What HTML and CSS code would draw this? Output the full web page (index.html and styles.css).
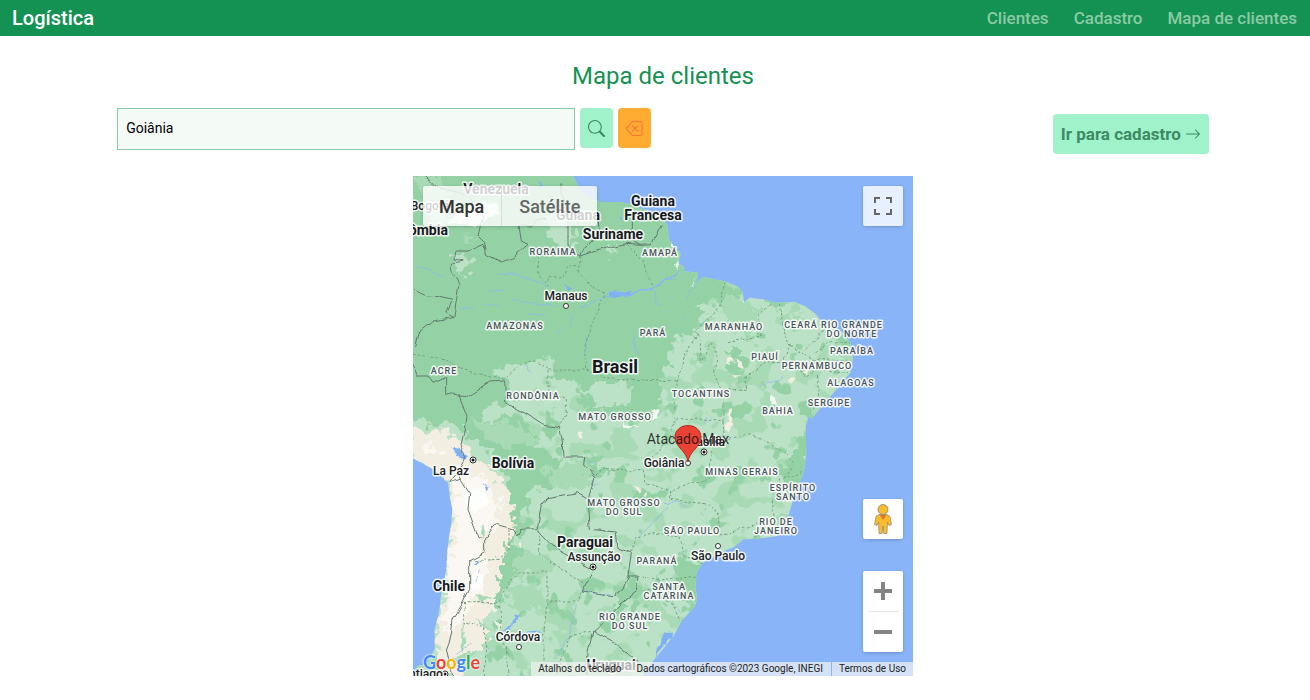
FILE: index.html
```html
<!DOCTYPE html>
<html lang="pt-BR">
<head>
<meta charset="utf-8">
<meta name="viewport" content="width=device-width, initial-scale=1">
<title>Logística - Mapa de clientes</title>
<link rel="stylesheet" href="styles.css">
</head>
<body>
<header class="topbar">
  <a class="brand" href="#">Logística</a>
  <nav class="menu">
    <a href="#">Clientes</a>
    <a href="#">Cadastro</a>
    <a href="#">Mapa de clientes</a>
  </nav>
</header>
<main class="page">
  <h1 class="title">Mapa de clientes</h1>
  <div class="toolbar">
    <form class="search">
      <input class="search-input" type="text" value="Goiânia" aria-label="Buscar cidade">
      <button class="icon-btn find" type="button" aria-label="Buscar">
        <svg width="17" height="17" viewBox="0 0 16 16" fill="currentColor"><path d="M11.742 10.344a6.5 6.5 0 1 0-1.397 1.398h-.001c.03.04.062.078.098.115l3.85 3.85a1 1 0 0 0 1.415-1.414l-3.85-3.85a1.007 1.007 0 0 0-.115-.1zM12 6.5a5.5 5.5 0 1 1-11 0 5.5 5.5 0 0 1 11 0z"/></svg>
      </button>
      <button class="icon-btn clear" type="button" aria-label="Limpar">
        <svg width="17" height="17" viewBox="0 0 16 16" fill="currentColor"><path d="M5.83 5.146a.5.5 0 0 0 0 .708L7.975 8l-2.147 2.146a.5.5 0 0 0 .707.708l2.147-2.147 2.146 2.147a.5.5 0 0 0 .707-.708L9.39 8l2.146-2.146a.5.5 0 0 0-.707-.708L8.683 7.293 6.536 5.146a.5.5 0 0 0-.707 0z"/><path d="M13.683 1a2 2 0 0 1 2 2v10a2 2 0 0 1-2 2h-7.08a2 2 0 0 1-1.519-.698L.241 8.65a1 1 0 0 1 0-1.302L5.084 1.7A2 2 0 0 1 6.603 1h7.08zm-7.08 1a1 1 0 0 0-.76.35L1 8l4.844 5.65a1 1 0 0 0 .759.35h7.08a1 1 0 0 0 1-1V3a1 1 0 0 0-1-1h-7.08z"/></svg>
      </button>
    </form>
    <a class="go-btn" href="#">Ir para cadastro
      <svg width="16" height="16" viewBox="0 0 16 16" fill="currentColor"><path fill-rule="evenodd" d="M1 8a.5.5 0 0 1 .5-.5h11.793l-3.147-3.146a.5.5 0 0 1 .708-.708l4 4a.5.5 0 0 1 0 .708l-4 4a.5.5 0 0 1-.708-.708L13.293 8.5H1.5A.5.5 0 0 1 1 8z"/></svg>
    </a>
  </div>

  <section class="map" aria-label="Mapa">
    <svg class="terrain" viewBox="0 0 1500 1500" aria-hidden="true">
      <defs>
        <path id="coast" d="M0 0H480L500 40 530 62 562 78 620 78 650 84 690 100 720 108 745 130 762 145 768 190 782 210 803 232 796 262 815 275 808 285 855 290 852 312 838 332 870 303 905 310 940 318 975 332 990 352 992 380 1010 365 1050 370 1085 380 1145 378 1175 390 1205 412 1230 440 1290 470 1312 500 1320 545 1312 590 1275 635 1235 680 1215 705 1195 728 1188 718 1178 750 1180 830 1172 890 1150 940 1135 990 1125 1025 1100 1055 1095 1080 1035 1088 990 1090 965 1112 920 1130 870 1160 850 1190 848 1240 852 1268 845 1292 805 1335 785 1375 750 1420 720 1455 690 1500H22L12 1470 40 1465 65 1420 65 1360 78 1310 85 1250 100 1180 105 1105 115 1040 118 1000 110 960 105 920 60 880 0 847Z"/>
        <clipPath id="land"><use href="#coast"/></clipPath>
        <filter id="rough" x="-5%" y="-5%" width="110%" height="110%"><feTurbulence type="fractalNoise" baseFrequency=".05" numOctaves="2" seed="4"/><feDisplacementMap in="SourceGraphic" scale="20" xChannelSelector="R" yChannelSelector="G"/></filter>
        <filter id="line" filterUnits="userSpaceOnUse" x="0" y="0" width="1500" height="1500"><feTurbulence type="fractalNoise" baseFrequency=".03" numOctaves="1" seed="5"/><feDisplacementMap in="SourceGraphic" scale="20" xChannelSelector="R" yChannelSelector="G"/></filter>
        <filter id="edge" x="-5%" y="-5%" width="110%" height="110%"><feTurbulence type="fractalNoise" baseFrequency=".035" numOctaves="3" seed="8"/><feDisplacementMap in="SourceGraphic" scale="70" xChannelSelector="R" yChannelSelector="G"/></filter>
        <filter id="patchA" x="0" y="0" width="100%" height="100%"><feTurbulence type="fractalNoise" baseFrequency=".012 .014" numOctaves="3" seed="11"/><feColorMatrix values="0 0 0 0 0 0 0 0 0 0 0 0 0 0 0 20 0 0 0 -11.2" result="m"/><feComposite in="SourceGraphic" in2="m" operator="in"/></filter>
        <filter id="patchB" x="0" y="0" width="100%" height="100%"><feTurbulence type="fractalNoise" baseFrequency=".018 .015" numOctaves="3" seed="27"/><feColorMatrix values="0 0 0 0 0 0 0 0 0 0 0 0 0 0 0 20 0 0 0 -12.8" result="m"/><feComposite in="SourceGraphic" in2="m" operator="in"/></filter>
      </defs>
      <g clip-path="url(#land)">
        <rect class="light" width="1500" height="1500"/>
        <path class="mid" filter="url(#patchA)" d="M250 560L760 300 1400 300V1500H200V700Z"/>
        <path class="deep" filter="url(#patchB)" d="M200 850L760 300 1400 300V1500H200Z"/>
        <path class="deep" filter="url(#edge)" d="M-40-40H540L800 160 870 290 990 340 860 390 850 470 790 480 800 520 750 540 770 570 740 620 745 690 690 720 600 720 510 700 500 620 400 610 400 540 330 560 290 620 280 700 330 720 380 800 440 850 430 920 350 950 320 1070 285 1110 255 1060 280 930 170 850 90 770 0 720-40 700Z"/>
        <path class="deep" filter="url(#edge)" d="M1200 730L1180 920 1130 960 1100 880ZM960 500L1010 560 980 640 950 560ZM790 1130L870 1170 860 1280 800 1270ZM650 1180L690 1240 610 1330 600 1280ZM280 1060L320 1120 290 1230 250 1290 240 1230ZM530 860L620 880 530 910ZM910 320L990 360 950 400 910 380Z"/>
        <path class="light" filter="url(#edge)" d="M410 120L470 130 490 200 440 210 400 180ZM40 90L100 90 100 150 60 160ZM130 240L180 250 165 290 130 285ZM240 590L280 560 370 570 400 610 380 640 310 640 270 610ZM500 650L540 615 650 610 650 680 560 700 540 670ZM230 700L320 660 300 720 200 740ZM0 750L120 740 230 830 290 920 290 1060 240 1060ZM590 195L612 210 600 245ZM790 480L850 500 830 600 790 560ZM390 560L410 540 410 600 370 620Z"/>
        <path class="mid" filter="url(#edge)" d="M170 740L300 740 380 800 280 820ZM390 880L520 850 540 930 430 930ZM930 350L1040 400 1020 500 950 450ZM1130 400L1180 420 1150 470ZM0 0H80L130 80 40 100ZM320 1120L380 1150 330 1190 280 1260ZM160 165L190 190 170 200ZM280 1290L370 1210 380 1320Z"/>
        <path class="sand" filter="url(#edge)" d="M-30 750L90 765 150 800 190 850 250 895 295 950 305 1030 290 1110 260 1150 265 1210 240 1290 215 1330 230 1390 200 1420 160 1450 150 1500H20L70 1450 70 1350 95 1250 100 1100 115 1000 100 915 0 845Z"/>
        <path class="snow" filter="url(#edge)" d="M125 880L210 900 260 970 250 1050 200 1090 220 1150 210 1240 170 1290 145 1340 95 1380 100 1200 130 1060ZM40 790L90 830 50 850Z"/>
        <path class="white" filter="url(#rough)" d="M155 930L215 940 225 985 185 1005 155 985ZM180 1185L215 1200 205 1240 175 1240ZM1070 655L1090 665 1095 690 1072 685ZM722 700L740 695 735 725 715 735ZM625 742L675 752 630 755ZM780 265L800 250 790 280ZM838 328L850 305 835 328ZM988 372L1000 365 995 382ZM770 190L790 215 775 210ZM170 80H250L260 110 190 150 100 140Z"/>
        <path class="sand" filter="url(#rough)" d="M943 703L957 700 952 735 963 745 945 770 933 755 945 730ZM945 545L958 550 950 568 940 560ZM970 548L990 560 992 582 975 570ZM958 598L985 598 965 608ZM1125 610L1150 600 1135 625ZM1172 588L1190 580 1185 600ZM497 772L510 768 508 785 497 788ZM662 932L685 938 675 950ZM690 955L702 948 698 965ZM318 1100L330 1098 322 1118ZM240 1330L262 1345 255 1365ZM190 1375L215 1400 200 1410Z"/>
        <path class="green-streak" filter="url(#rough)" d="M190 1250L235 1270 200 1280ZM150 1340L160 1400 145 1430ZM185 1320L240 1370 205 1350ZM110 1450L190 1420 180 1440 130 1470ZM205 1050L215 1060 212 1090ZM15 1470L70 1440 85 1500H0Z"/>
        <path class="lake" filter="url(#rough)" d="M118 812L140 815 145 830 165 840 158 850 130 840ZM212 920L226 940 220 946ZM310 1312L320 1320 312 1342 300 1340 295 1362 270 1370 280 1350 298 1340ZM195 1148L200 1165 190 1168ZM455 326L478 340 466 346ZM578 365L592 345 660 352 635 362ZM620 110L628 128 622 138ZM755 1370L785 1370 760 1400 730 1440ZM735 1410L745 1412 728 1450ZM380 10L388 30 380 42ZM340 1370L385 1365 350 1378Z"/>
        <g class="water" filter="url(#line)">
          <path class="river" d="M590 350L650 358 720 335 760 315 800 285"/>
          <path d="M395 385L435 392M500 395L560 372 590 350M245 295L300 293 350 310 405 332M230 345L275 342M140 405L180 390M210 386L260 385M300 372L400 390M395 415L340 420M725 340L730 375 745 392M765 315L790 310M820 370L825 350 850 330M810 420L825 438M660 480L670 520 680 545M10 272L65 290 95 305M1042 630L1070 620 1110 610 1112 602M185 1215L200 1180M505 1245L540 1255 600 1256M755 980L790 978 820 990M680 1080L730 1030 770 990M440 1440L450 1400 470 1380 490 1290M230 1430L215 1410M770 1275L805 1310M545 900L545 935M530 855L545 865M130 1435L180 1400M480 420L470 450M370 450L380 440M520 480L515 530M345 570L350 590M430 475L445 455M340 20L358 45M420 90L430 70M880 740L880 720M790 720L780 750"/>
        </g>
        <g class="borders" filter="url(#line)">
          <path d="M35 0L80 40 170 60 185 90 210 120 202 150 195 180 215 200 220 235 265 258 300 245 345 205 325 195 318 150 350 150 370 135 400 130M125 225L165 225 210 205 218 220M125 225L122 248 148 255 118 262 118 290 138 325 122 425 98 410 115 370 75 358 40 360 0 340M122 425L60 435 15 470 5 510M440 20L465 120 465 210 500 240 555 222 595 212 645 202 680 205 715 203 745 145M555 120L560 180 510 215 500 240M655 110L655 190 680 205M0 565L15 600 45 600 60 622 98 605 98 655 160 662 230 618 275 615 278 680 310 700 345 715 395 748 440 755 448 800 450 843 518 843 515 870 545 905 525 970 532 1060 610 1068 615 1115 655 1130 645 1200 630 1240 600 1262 508 1248 540 1190M137 655L162 720 155 775 142 830 155 850 135 885 145 910 170 950 165 1000 195 1082 215 1085 250 1045 300 1060 315 1080 325 1060 372 1058 385 990 405 965 490 950 525 970M372 1058L430 1120 540 1180M215 1085L215 1130 170 1155 170 1240 150 1280 120 1330 115 1380 100 1420 120 1500M135 885L110 920 145 910M645 1200L675 1200 670 1245 620 1285 580 1330 540 1365 525 1430 520 1500M540 1365L610 1405 670 1455 700 1500"/>
          <path class="dash" d="M500 240L500 290 540 335 575 355 515 510 518 582 405 582 405 650 460 670 460 710 440 750M375 240L378 300 405 330 410 305 450 305 460 272 500 272M640 205L690 255 700 290 725 330M0 535L90 548 150 580 240 605 275 610 330 560 370 558 410 582M520 582L575 605 790 618 780 725 820 730 900 730 930 735 930 650 905 590 910 520 895 500 865 560 860 480 845 465 920 390 935 320M790 618L830 510 860 465M1040 480L1040 420 1070 385M1100 383L1105 440 1130 510 1110 560 1060 560 1000 600 1000 640 950 640M1180 520L1240 455M1205 530L1250 500 1310 500M1200 550L1310 555M1110 560L1180 600 1220 580 1310 590M1210 600L1220 660 1200 700M1130 510L1200 550M1010 775L1100 815 1145 860 1110 910 1170 890M930 735L935 800 1000 775M895 820L890 910 830 920 770 945 700 920 690 880 770 790 780 730M545 900L570 880 640 885 690 880M770 945L770 970 890 985 920 1020 920 1080 1040 1040M655 1130L670 1085 720 1070 800 1080 815 1140 870 1165M675 1200L740 1215 850 1200M675 1240L720 1245 780 1290 800 1330M1075 970L1080 1020 1020 1090M315 1188L402 1188 402 1278 495 1278 505 1248M402 1278L390 1400 390 1480M380 1060L380 1135 510 1220M315 1188L255 1280 155 1280 150 1340 215 1355 215 1500M285 1060L285 1120 260 1150 170 1155M260 1290L270 1400 290 1440M470 1380L540 1365M945 500L1040 480M280 1410L285 1500M470 1380L430 1500M1100 910L1090 960"/>
        </g>
      </g>
    </svg>
    <svg class="labels" viewBox="0 0 500 500" role="img" aria-label="Cidades e estados">
      <g class="dots">
        <circle cx="153" cy="130" r="2.5"/><circle cx="305" cy="370" r="2.5"/><circle cx="106" cy="471" r="2.5"/><circle cx="275" cy="287" r="2.5"/>
        <g class="capital"><circle cx="60" cy="284" r="3"/><circle cx="291" cy="276" r="3"/><circle cx="180" cy="391" r="3"/><circle cx="32" cy="498" r="3"/></g>
        <g class="core"><circle cx="60" cy="284" r="1.5"/><circle cx="291" cy="276" r="1.5"/><circle cx="180" cy="391" r="1.5"/><circle cx="32" cy="498" r="1.5"/></g>
      </g>
      <g class="state">
        <text x="140" y="79">RORAIMA</text><text x="247" y="80">AMAPÁ</text><text x="102" y="153">AMAZONAS</text><text x="240" y="160">PARÁ</text><text x="321" y="154">MARANHÃO</text><text x="388" y="152">CEARÁ</text><text x="439" y="152">RIO GRANDE</text><text x="439" y="161">DO NORTE</text><text x="352" y="184">PIAUÍ</text><text x="439" y="178">PARAÍBA</text><text x="404" y="193">PERNAMBUCO</text><text x="438" y="210">ALAGOAS</text><text x="416" y="230">SERGIPE</text><text x="31" y="198">ACRE</text><text x="120" y="223">RONDÔNIA</text><text x="288" y="221">TOCANTINS</text><text x="365" y="238">BAHIA</text><text x="202" y="244">MATO GROSSO</text><text x="329" y="299">MINAS GERAIS</text><text x="380" y="315">ESPÍRITO</text><text x="380" y="324">SANTO</text><text x="211" y="330">MATO GROSSO</text><text x="211" y="339">DO SUL</text><text x="279" y="358">SÃO PAULO</text><text x="363" y="349">RIO DE</text><text x="363" y="358">JANEIRO</text><text x="244" y="388">PARANÁ</text><text x="256" y="414">SANTA</text><text x="256" y="423">CATARINA</text><text x="217" y="444">RIO GRANDE</text><text x="217" y="453">DO SUL</text>
      </g>
      <g class="city">
        <text x="153" y="124">Manaus</text><text x="38" y="299">La Paz</text><text x="251" y="291">Goiânia</text><text x="292" y="270">Brasília</text><text x="181" y="385">Assunção</text><text x="305" y="384">São Paulo</text><text x="105" y="465">Córdova</text><text x="17" y="34">Bogotá</text><text x="6" y="502">Santiago</text>
      </g>
      <g class="country">
        <text x="83" y="18">Venezuela</text><text x="165" y="44">Guiana</text><text x="240" y="30">Guiana</text><text x="240" y="44">Francesa</text><text x="200" y="63">Suriname</text><text x="5" y="59">Colômbia</text><text x="100" y="292">Bolívia</text><text x="172" y="371">Paraguai</text><text x="36" y="415">Chile</text><text x="198" y="494">Uruguai</text><text class="brasil" x="202" y="197">Brasil</text>
      </g>
      <path class="pin" d="M275 286C274 275 262 271 262 261.500C262 254 268 249.500 275 249.500S288 254 288 261.500C288 271 276 275 275 286Z"/>
      <text class="pin-label" x="275" y="268">Atacado Max</text>
    </svg>
    <div class="map-ui">
      <div class="row">
        <div class="types"><button type="button">Mapa</button><button class="off" type="button">Satélite</button></div>
        <button class="ctrl full" type="button" aria-label="Tela cheia"><svg width="18" height="18" viewBox="0 0 18 18"><path d="M0 0v6h2V2h4V0H2zM16 0h-4v2h4v4h2V0h-2zM16 16h-4v2h6v-6h-2zM2 12H0v6h6v-2H2z" fill="#666"/></svg></button>
      </div>
      <div class="side">
        <button class="ctrl" type="button" aria-label="Street View"><svg width="20" height="32" viewBox="0 0 20 32"><path d="M6 11.500L3 13.500 1.500 21.500 4 22.500 5.500 19 6 30.500H9.200L10 23 10.800 30.500H14L14.500 19 16 22.500 18.500 21.500 17 13.500 14 11.500Z" fill="#fbbc2c" stroke="#777" stroke-width=".6"/><path d="M6.500 12H13.500L10 17Z" fill="#e37426"/><circle cx="10" cy="6.500" r="5" fill="#fbbc2c" stroke="#777" stroke-width=".7"/></svg></button>
        <div class="zoom">
          <button type="button" aria-label="Aumentar zoom"><svg width="18" height="18" viewBox="0 0 18 18"><path d="M7 0h4v7h7v4h-7v7H7v-7H0V7h7z" fill="#838383"/></svg></button>
          <button type="button" aria-label="Diminuir zoom"><svg width="18" height="18" viewBox="0 0 18 18"><path d="M0 7h18v4H0z" fill="#838383"/></svg></button>
        </div>
      </div>
      <a class="google" href="#"><span class="b">G</span><span class="r">o</span><span class="y">o</span><span class="b">g</span><span class="g">l</span><span class="r">e</span></a>
      <div class="legal"><button type="button">Atalhos do teclado</button><span>Dados cartográficos ©2023 Google, INEGI</span><a href="#">Termos de Uso</a></div>
    </div>
  </section>
</main>
</body>
</html>
```
FILE: styles.css
```css
* { box-sizing: border-box; }
body { margin: 0; background: #fff; font-family: Roboto, "Liberation Sans", sans-serif; }
a { text-decoration: none; }
button { border: 0; margin: 0; padding: 0; font: inherit; cursor: pointer; }
svg { display: block; }

.topbar { display: flex; align-items: center; justify-content: space-between; height: 36px; padding: 0 13px 0 12px; background: #149253; }
.brand { color: #fff; font-size: 20px; font-weight: 500; }
.menu { display: flex; gap: 25px; }
.menu a { color: #8acaa4; font-size: 17px; font-weight: 500; }

.page { width: calc(83.3333% + 16px); margin: 0 auto; padding-left: 16px; }
.title { margin: 24px 0 16px; color: #149253; font-size: 24px; font-weight: 400; line-height: 32px; text-align: center; }
.toolbar { display: flex; justify-content: space-between; align-items: flex-start; margin-bottom: 22px; }
.search { display: flex; flex: 0 0 48.9%; align-items: flex-start; gap: 5px; }
.search-input { flex: 1; min-width: 0; height: 42px; padding: 0 8px 2px; border: 1px solid #89c9a9; background: #f4faf6; color: #000; font: 14px/20px Roboto, sans-serif; }
.icon-btn { display: flex; align-items: center; justify-content: center; width: 33px; height: 40px; border-radius: 4px; }
.find { background: #9ff2c9; color: #3d8a64; }
.clear { background: #ffac33; color: #ff7433; }
.go-btn { display: flex; align-items: center; gap: 4px; height: 40px; margin-top: 6px; padding: 0 8px; border-radius: 4px; background: #9ff2c9; color: #3d8a64; font-size: 17px; font-weight: 700; }

.map { position: relative; width: 500px; max-width: 100%; aspect-ratio: 1; margin: 0 auto; overflow: hidden; background: #89b4f8; }
.terrain, .labels, .map-ui { position: absolute; inset: 0; width: 100%; height: 100%; }
.light { fill: #bbe2c6; }
.mid { fill: #a8dab5; }
.deep { fill: #94d2a5; }
.sand { fill: #f3eee2; }
.snow { fill: #fbf8f3; }
.white { fill: #fff; fill-opacity: .8; }
.green-streak { fill: #a8dab5; }
.lake { fill: #7fb0f6; }
.water path { fill: none; stroke: #89b4f8; stroke-width: 2; }
.water .river { stroke-width: 5; }
.borders path { fill: none; stroke: #647a71; stroke-width: 3; }
.borders .dash { stroke: #78a184; stroke-dasharray: 8 6; }

.labels text { text-anchor: middle; paint-order: stroke; stroke: #fff; stroke-width: 3px; stroke-linejoin: round; stroke-opacity: .85; }
.labels .state { fill: #4a5359; font-size: 9px; font-weight: 500; letter-spacing: 1px; }
.labels .city { fill: #202124; font-size: 12px; font-weight: 500; }
.labels .country { fill: #15181c; font-size: 14px; font-weight: 700; }
.labels .brasil { font-size: 18px; }
.dots circle { fill: #fff; stroke: #333; stroke-width: 1px; }
.dots .core circle { fill: #111; stroke: none; }
.pin { fill: #ea4335; stroke: #b5271c; stroke-width: 1px; }
.labels .pin-label { fill: #111; fill-opacity: .85; stroke: none; font-size: 14px; }

.map-ui { padding: 10px; }
.row { display: flex; justify-content: space-between; align-items: flex-start; }
.types { display: flex; box-shadow: 0 1px 4px -1px rgba(0, 0, 0, .3); border-radius: 2px; overflow: hidden; }
.types button { height: 40px; padding: 0 17px 0 16px; background: rgba(255, 255, 255, .8); color: #333; font-size: 18px; font-weight: 500; }
.types .off { padding: 0 17px; border-left: 1px solid rgba(190, 215, 196, .6); color: #666; }
.ctrl { display: flex; align-items: center; justify-content: center; width: 40px; height: 40px; border-radius: 2px; background: #fff; box-shadow: 0 1px 4px -1px rgba(0, 0, 0, .3); }
.full { background: #e7f0fe; }
.side { position: absolute; right: 10px; bottom: 24px; display: flex; flex-direction: column; gap: 32px; }
.zoom { display: flex; flex-direction: column; width: 40px; border-radius: 2px; background: #fff; box-shadow: 0 1px 4px -1px rgba(0, 0, 0, .3); }
.zoom button { display: flex; align-items: center; justify-content: center; height: 40px; margin: 0 5px; background: none; }
.zoom button + button { height: 41px; border-top: 1px solid #e6e6e6; }
.google { position: absolute; left: 10px; bottom: 2px; font: 700 18px/24px Lato, Roboto, sans-serif; text-shadow: 0 0 2px #fff, 0 0 2px #fff; }
.google .b { color: #4285f4; }
.google .r { color: #ea4335; }
.google .y { color: #f4b400; }
.google .g { color: #34a853; }
.legal { position: absolute; right: 0; bottom: 0; display: flex; height: 14px; white-space: nowrap; }
.legal > * { padding: 0 7px; background: rgba(245, 245, 245, .7); color: #222; font-size: 10px; line-height: 14px; }
.legal > span { padding: 0 8px; }
.legal a { margin-left: 1px; }
```
